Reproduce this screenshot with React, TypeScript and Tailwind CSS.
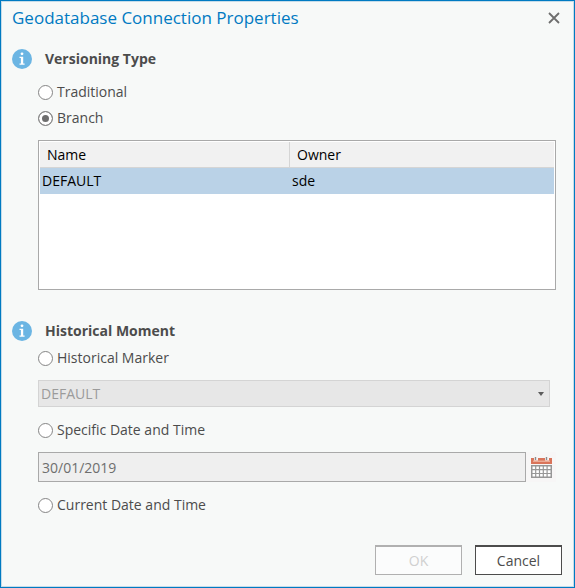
import { useState } from "react";

type Version = {
  name: string;
  owner: string;
};

const versions: Version[] = [{ name: "DEFAULT", owner: "sde" }];

const InfoIcon = () => (
  <svg viewBox="0 0 20 20" className="size-5 shrink-0" aria-hidden="true">
    <circle cx="10" cy="10" r="10" fill="#6bb5e3" />
    <circle cx="10" cy="4.8" r="1.4" fill="#fff" />
    <path d="M7.5 7.8h3.7v6.8h1.4v1.1H7.5v-1.1h1.4V8.9H7.5z" fill="#fff" />
  </svg>
);

const CalendarIcon = () => (
  <svg viewBox="0 0 21 21" className="size-[21px]" aria-hidden="true">
    <path d="M0 1h21v6H0z" fill="#d9745a" />
    <path d="M2 3.5h17v1.5H2z" fill="#eba993" />
    <path d="M3 0h4v3.5H3zM14 0h4v3.5h-4z" fill="#f7f4f4" />
    <path d="M4.5 0v3M15.5 0v3" stroke="#8c8c8c" strokeWidth="1.4" />
    <path d="M0 8h21v13H0z" fill="#979797" />
    <path
      d="M1.5 9.5h2.6v2.6H1.5zM5.3 9.5h2.6v2.6H5.3zM9.1 9.5h2.6v2.6H9.1zM12.9 9.5h2.6v2.6h-2.6zM16.7 9.5h2.8v2.6h-2.8zM1.5 13.3h2.6v2.6H1.5zM5.3 13.3h2.6v2.6H5.3zM9.1 13.3h2.6v2.6H9.1zM12.9 13.3h2.6v2.6h-2.6zM16.7 13.3h2.8v2.6h-2.8zM1.5 17.1h2.6v2.4H1.5zM5.3 17.1h2.6v2.4H5.3zM9.1 17.1h2.6v2.4H9.1zM12.9 17.1h2.6v2.4h-2.6zM16.7 17.1h2.8v2.4h-2.8z"
      fill="#fff"
    />
  </svg>
);

const SectionTitle = ({ children }: { children: string }) => (
  <div className="flex h-6 items-center gap-[13px] pl-[10px]">
    <InfoIcon />
    <h2 className="font-bold">{children}</h2>
  </div>
);

type RadioProps = {
  name: string;
  label: string;
  checked: boolean;
  onChange: () => void;
};

const Radio = ({ name, label, checked, onChange }: RadioProps) => (
  <label className="flex h-[26px] items-center gap-1">
    <input
      type="radio"
      name={name}
      checked={checked}
      onChange={onChange}
      className="size-[15px] shrink-0 appearance-none rounded-full border border-[#858585] bg-white checked:bg-[#6e6e6e] checked:shadow-[inset_0_0_0_3px_#fff]"
    />
    {label}
  </label>
);

const App = () => {
  const [versioning, setVersioning] = useState("branch");
  const [moment, setMoment] = useState("");

  return (
    <div className="min-h-screen border border-[#007ac2] bg-[#f7f9f8] font-['Open_Sans','Noto_Sans',sans-serif] text-sm text-[#4c4c4c]">
      <div className="flex min-h-[calc(100vh-2px)] flex-col border border-[#c5dce9]">
        {/* Title bar */}
        <div className="flex h-8 items-center justify-between pr-[13px] pl-[10px]">
          <h1 className="text-[17px] text-[#007ac2]">
            Geodatabase Connection Properties
          </h1>
          <button type="button" aria-label="Close">
            <svg viewBox="0 0 12 12" className="size-3" aria-hidden="true">
              <path
                d="M1 1l10 10M11 1L1 11"
                stroke="#6e6e6e"
                strokeWidth="1.8"
              />
            </svg>
          </button>
        </div>

        {/* Versioning type */}
        <div className="mt-[13px]">
          <SectionTitle>Versioning Type</SectionTitle>
          <div className="mt-2 pr-[17px] pl-9">
            <Radio
              name="versioning"
              label="Traditional"
              checked={versioning === "traditional"}
              onChange={() => setVersioning("traditional")}
            />
            <Radio
              name="versioning"
              label="Branch"
              checked={versioning === "branch"}
              onChange={() => setVersioning("branch")}
            />
            <div className="mt-[9px] h-[150px] border border-[#a9a9a9] bg-white p-px text-black">
              <table className="w-full table-fixed border-separate border-spacing-0 text-left">
                <thead>
                  <tr className="h-[26px] bg-[#f1f1f1]">
                    <th className="w-[250px] border-r border-b border-[#d5d5d5] p-0 pl-[7px] font-normal">
                      Name
                    </th>
                    <th className="border-b border-[#d5d5d5] p-0 pl-[7px] font-normal">
                      Owner
                    </th>
                  </tr>
                </thead>
                <tbody>
                  {versions.map((item) => (
                    <tr key={item.name} className="h-[26px] bg-[#bad2e7]">
                      <td className="p-0 pl-[2px]">{item.name}</td>
                      <td className="p-0 pl-[2px]">{item.owner}</td>
                    </tr>
                  ))}
                </tbody>
              </table>
            </div>
          </div>
        </div>

        {/* Historical moment */}
        <div className="mt-[29px]">
          <SectionTitle>Historical Moment</SectionTitle>
          <div className="mt-[2px] pr-[17px] pl-9">
            <Radio
              name="moment"
              label="Historical Marker"
              checked={moment === "marker"}
              onChange={() => setMoment("marker")}
            />
            <div className="relative mt-[9px] mr-[6px]">
              <select
                disabled
                aria-label="Historical Marker"
                className="block h-[27px] w-full appearance-none border border-[#d4d4d4] bg-[#e7e7e7] px-[2px] text-[#9b9b9b] opacity-100"
              >
                <option>DEFAULT</option>
              </select>
              <svg
                viewBox="0 0 6 4"
                className="absolute top-3 right-[6px] h-1 w-[6px]"
                aria-hidden="true"
              >
                <path d="M0 0h6L3 4z" fill="#5c5c5c" />
              </svg>
            </div>
            <div className="mt-[10px]">
              <Radio
                name="moment"
                label="Specific Date and Time"
                checked={moment === "specific"}
                onChange={() => setMoment("specific")}
              />
            </div>
            <div className="mt-[9px] flex">
              <input
                type="text"
                disabled
                aria-label="Specific Date and Time"
                value="30/01/2019"
                className="h-[30px] min-w-0 flex-1 border border-[#a9a9a9] bg-[#efefef] px-[3px] text-[#6e6e6e]"
              />
              <button
                type="button"
                aria-label="Choose date"
                className="flex h-[30px] w-[30px] items-center justify-center bg-[#f7f6f6]"
              >
                <CalendarIcon />
              </button>
            </div>
            <div className="mt-[10px]">
              <Radio
                name="moment"
                label="Current Date and Time"
                checked={moment === "current"}
                onChange={() => setMoment("current")}
              />
            </div>
          </div>
        </div>

        {/* Footer buttons */}
        <div className="mt-auto flex justify-end gap-[13px] pt-5 pr-[11px] pb-[11px]">
          <button
            type="button"
            disabled
            className="h-[30px] w-[87px] border border-t-2 border-[#b0b0b0] bg-[#fbfcfc] text-[#d0d0d0]"
          >
            OK
          </button>
          <button
            type="button"
            className="h-[30px] w-[87px] border border-t-2 border-[#4c4c4c] bg-white"
          >
            Cancel
          </button>
        </div>
      </div>
    </div>
  );
};

export default App;
